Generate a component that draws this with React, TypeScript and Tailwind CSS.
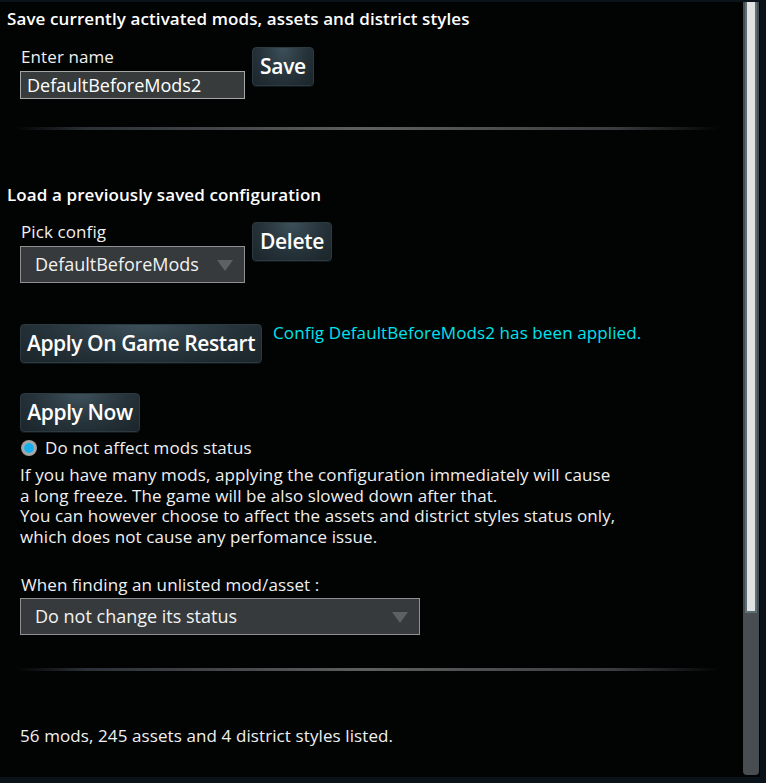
import React from "react";

const font = { fontFamily: '"Open Sans", "Noto Sans", sans-serif' };

function GameButton({ children, className = "" }: { children: React.ReactNode; className?: string }) {
  return (
    <div
      className={
        "flex items-center justify-center rounded-[4px] border border-[#2c3a41] bg-[radial-gradient(ellipse_at_50%_0%,#3d505a_0%,#26333a_55%,#1b252a_100%)] text-white font-semibold shadow-[0_1px_0_#11181c] " +
        className
      }
    >
      {children}
    </div>
  );
}

function Separator({ className = "" }: { className?: string }) {
  return (
    <div
      className={
        "h-[3px] ml-[15px] w-[705px] bg-[linear-gradient(to_right,rgba(40,44,48,0)_0%,#2a3036_10%,#5f5f5f_50%,#3a3d40_85%,rgba(20,24,28,0)_100%)] " +
        className
      }
    />
  );
}

function Dropdown({ text, className = "", clip = "mr-[41px]" }: { text: string; className?: string; clip?: string }) {
  return (
    <div
      className={
        "relative h-[37px] border border-[#8e9091] bg-[#363a3c] flex items-center overflow-hidden " + className
      }
    >
      <span className={"block ml-[14px] text-[18px] text-[#f2f2f2] whitespace-nowrap overflow-hidden " + clip}>
        {text}
      </span>
      <svg className="absolute right-[11px] top-[13px]" width="16" height="11" viewBox="0 0 16 11">
        <polygon points="0,0 16,0 8,11" fill="#5e6163" />
      </svg>
    </div>
  );
}

export default function App() {
  return (
    <div className="w-[766px] h-[783px] bg-[#0b131a] pt-[2px] pr-[6px] pb-[6px] overflow-hidden" style={font}>
      <div className="flex h-full bg-[#020303]">
        <div className="flex-1 text-[#f0f0f0]">
          <div className="mt-[6px] pl-[7px] text-[17px] leading-[22px] font-semibold tracking-[0.1px] text-white">
            Save currently activated mods, assets and district styles
          </div>

          <div className="mt-[17px] ml-[20px] flex items-start gap-[7px]">
            <div className="flex flex-col">
              <div className="-mt-[1px] ml-[1px] text-[17px] leading-[22px] tracking-[0.1px]">Enter name</div>
              <div className="mt-[3px] w-[225px] h-[28px] border border-[#a4a6a7] bg-[#373b3c] flex items-center pl-[6px] text-[18px] text-white">
                DefaultBeforeMods2
              </div>
            </div>
            <GameButton className="w-[62px] h-[39px] text-[21px] tracking-[-0.3px]">Save</GameButton>
          </div>

          <Separator className="mt-[28px]" />

          <div className="mt-[54px] pl-[7px] text-[17px] leading-[22px] font-semibold tracking-[0.1px] text-white">
            Load a previously saved configuration
          </div>

          <div className="mt-[16px] ml-[20px] flex items-start gap-[7px]">
            <div className="flex flex-col">
              <div className="-mt-[1px] ml-[1px] text-[17px] leading-[22px] tracking-[0.1px]">Pick config</div>
              <Dropdown text="DefaultBeforeMods2" clip="mr-[45px]" className="mt-[3px] w-[225px]" />
            </div>
            <GameButton className="w-[80px] h-[39px] text-[21px] tracking-[-0.3px]">Delete</GameButton>
          </div>

          <div className="mt-[41px] ml-[20px] flex items-start gap-[11px]">
            <GameButton className="w-[242px] h-[39px] text-[21px] tracking-[-0.4px]">Apply On Game Restart</GameButton>
            <div className="-mt-[2px] text-[17px] leading-[22px] text-[#00e3ef] tracking-[0.1px]">
              Config DefaultBeforeMods2 has been applied.
            </div>
          </div>

          <GameButton className="mt-[30px] ml-[20px] w-[120px] h-[39px] text-[21px] tracking-[-0.4px]">Apply Now</GameButton>

          <div className="mt-[5px] ml-[21px] flex items-center gap-[8px] h-[22px]">
            <div className="w-[16px] h-[16px] rounded-full bg-[radial-gradient(circle,#c8c8c8_0%,#8a8a8a_100%)] flex items-center justify-center">
              <div className="w-[10px] h-[10px] rounded-full bg-[#17b0ec]" />
            </div>
            <span className="text-[17px] leading-[22px] tracking-[0.1px]">Do not affect mods status</span>
          </div>

          <div className="mt-[6px] ml-[20px] text-[17px] leading-[20.5px] tracking-[0.1px]">
            <div>If you have many mods, applying the configuration immediately will cause</div>
            <div>a long freeze. The game will be also slowed down after that.</div>
            <div>You can however choose to affect the assets and district styles status only,</div>
            <div>which does not cause any perfomance issue.</div>
          </div>

          <div className="mt-[27px] ml-[21px] text-[17px] leading-[22px] tracking-[0.1px]">
            When finding an unlisted mod/asset :
          </div>
          <Dropdown text="Do not change its status" className="mt-[2px] ml-[20px] w-[400px]" />

          <Separator className="mt-[33px]" />

          <div className="mt-[54px] ml-[20px] text-[17px] leading-[22px] tracking-[0.1px]">
            56 mods, 245 assets and 4 district styles listed.
          </div>
        </div>

        <div className="w-[18px] pl-[1px] pb-[2px] flex flex-col">
          <div className="w-[16px] h-full rounded-b-[4px] bg-[#474d50] flex flex-col items-center">
            <div className="w-[12px] h-[611px] bg-[#e1e1e1] border-x-[2px] border-b-[2px] border-[#5d6e74]" />
          </div>
        </div>
      </div>
    </div>
  );
}
